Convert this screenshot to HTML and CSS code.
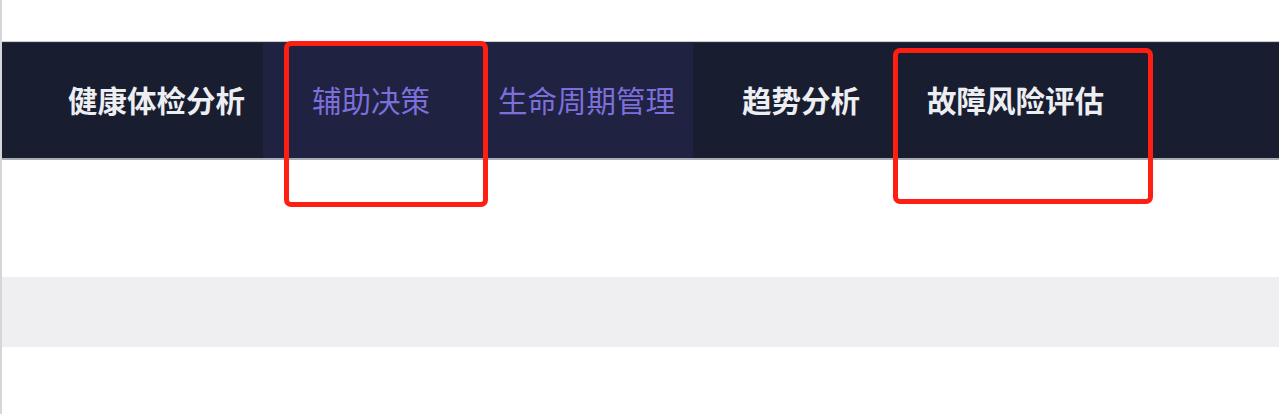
FILE: index.html
```html
<!DOCTYPE html>
<html lang="zh-CN">
<head>
<meta charset="utf-8">
<title>导航</title>
<link rel="stylesheet" href="styles.css">
</head>
<body>
<div class="page">
  <div class="top-space"></div>
  <nav class="nav">
    <a class="item item-first">健康体检分析</a>
    <div class="group">
      <a class="item item-active">辅助决策</a>
      <a class="item item-active">生命周期管理</a>
    </div>
    <a class="item item-after">趋势分析</a>
    <a class="item item-last">故障风险评估</a>
  </nav>
  <div class="gap-a"></div>
  <div class="band"></div>
  <div class="rest"></div>
  <div class="mark mark-1"></div>
  <div class="mark mark-2"></div>
</div>
</body>
</html>
```
FILE: styles.css
```css
html, body {
  margin: 0;
  padding: 0;
  background: #ffffff;
}
body {
  font-family: "Noto Sans CJK SC", "Noto Sans", sans-serif;
}
.page {
  position: relative;
  width: 1279px;
  height: 414px;
  overflow: hidden;
  border-left: 2px solid #d6d6d8;
  box-sizing: border-box;
}
.top-space {
  height: 42px;
  border-bottom: 1px solid #c9cbd0;
  box-sizing: border-box;
  background: #ffffff;
}
.nav {
  display: flex;
  align-items: stretch;
  height: 118px;
  background: #181d30;
  border-top: 1px solid #252a3d;
  border-bottom: 2px solid #a9acb5;
  box-sizing: border-box;
  padding-left: 66px;
}
.item {
  display: flex;
  align-items: center;
  font-size: 29.5px;
  line-height: 1;
  color: #eceef2;
  font-weight: 600;
  white-space: nowrap;
  padding-bottom: 2px;
}
.item-first {
  margin-right: 18px;
}
.group {
  display: flex;
  align-items: stretch;
  gap: 68px;
  background: #1f2240;
  padding-left: 49px;
  padding-right: 18px;
}
.item-active {
  color: #7d6fdb;
  font-weight: 400;
}
.item-after {
  margin-left: 49px;
}
.item-last {
  margin-left: 67px;
}
.gap-a {
  height: 117px;
}
.band {
  height: 70px;
  background: #efeff1;
}
.rest {
  height: 66px;
}
.mark {
  position: absolute;
  border: 5px solid #ff1f12;
  border-radius: 7px;
  box-sizing: border-box;
}
.mark-1 {
  left: 282px;
  top: 41px;
  width: 204px;
  height: 166px;
}
.mark-2 {
  left: 891px;
  top: 48px;
  width: 260px;
  height: 156px;
}
```
